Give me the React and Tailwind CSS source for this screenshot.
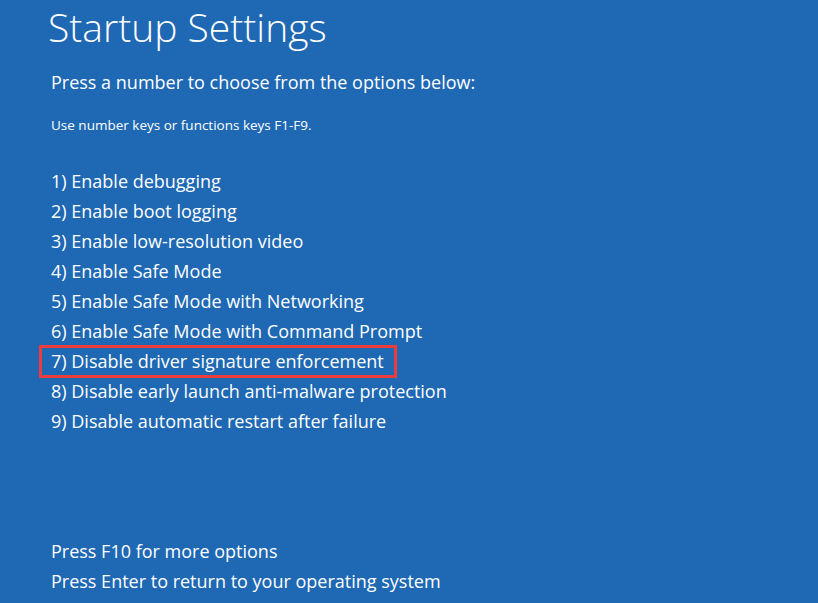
export default function App() {
  const items = [
    "1) Enable debugging",
    "2) Enable boot logging",
    "3) Enable low-resolution video",
    "4) Enable Safe Mode",
    "5) Enable Safe Mode with Networking",
    "6) Enable Safe Mode with Command Prompt",
    "7) Disable driver signature enforcement",
    "8) Disable early launch anti-malware protection",
    "9) Disable automatic restart after failure",
  ];
  return (
    <div
      className="w-[818px] h-[603px] bg-[#1e68b4] text-white overflow-hidden flex flex-col pl-[51px]"
      style={{ fontFamily: '"Open Sans", "Noto Sans", sans-serif' }}
    >
      <div className="text-[39px] leading-[48px] font-light ml-[-3px] mt-[3px]">Startup Settings</div>
      <div className="text-[18px] leading-[30px] mt-[16px]">Press a number to choose from the options below:</div>
      <div className="text-[13.5px] leading-[20px] mt-[18px]">Use number keys or functions keys F1-F9.</div>
      <div className="flex flex-col mt-[31px]">
        {items.map((t, i) =>
          i === 6 ? (
            <div key={i} className="h-[30px] flex items-center relative">
              <div className="absolute left-[-12px] top-[-1px] w-[358px] h-[33px] border-[3px] border-[#ee3b3b]" />
              <span className="text-[18px] leading-[30px]">{t}</span>
            </div>
          ) : (
            <div key={i} className="h-[30px] flex items-center">
              <span className="text-[18px] leading-[30px]">{t}</span>
            </div>
          )
        )}
      </div>
      <div className="flex flex-col mt-[100px]">
        <div className="text-[18px] leading-[30px]">Press F10 for more options</div>
        <div className="text-[18px] leading-[30px]">Press Enter to return to your operating system</div>
      </div>
    </div>
  );
}
